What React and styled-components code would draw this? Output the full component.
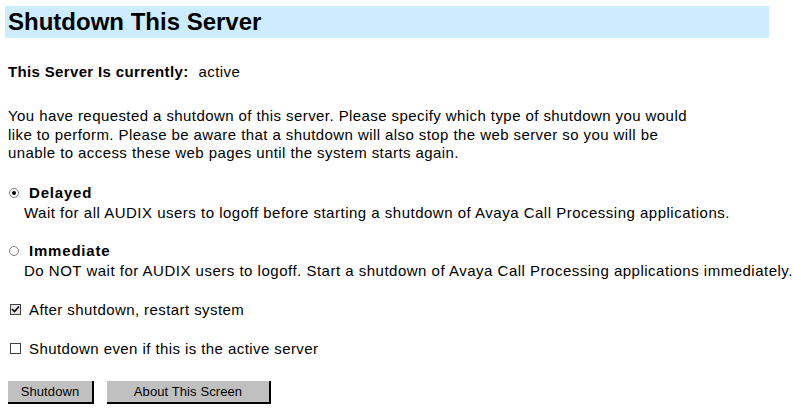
import React from 'react';
import styled, { createGlobalStyle } from 'styled-components';

const GlobalStyle = createGlobalStyle`
  body {
    margin: 0;
    background: #fff;
    font-family: "Liberation Sans", Arial, Helvetica, sans-serif;
    color: #000;
  }
`;

const Page = styled.div`
  width: 794px;
  height: 412px;
  padding: 6px 0 0 5px;
  box-sizing: border-box;
  overflow: hidden;
`;

const Banner = styled.h1`
  margin: 0;
  width: 764px;
  height: 32px;
  line-height: 32px;
  padding-left: 3px;
  box-sizing: border-box;
  background: #cdecff;
  font-size: 24px;
  font-weight: bold;
`;

const Body = styled.div`
  padding-left: 3px;
  font-size: 15px;
  letter-spacing: 0.42px;
`;

const Status = styled.div`
  margin-top: 25px;
  line-height: 18px;
`;

const StatusLabel = styled.b`
  margin-right: 10px;
  letter-spacing: 0.35px;
`;

const Intro = styled.p`
  margin: 26px 0 0;
  line-height: 18.5px;
  white-space: nowrap;
`;

const Option = styled.div`
  margin-top: ${(p) => p.$gap}px;
`;

const OptionRow = styled.label`
  display: flex;
  align-items: center;
  height: 20px;
`;

const OptionTitle = styled.b`
  margin-left: 10px;
  letter-spacing: 0.8px;
`;

const OptionText = styled.div`
  padding-left: 16px;
  height: 20px;
  line-height: 20px;
  white-space: nowrap;
  letter-spacing: 0.5px;
`;

const Radio = styled.span`
  width: 10px;
  height: 10px;
  margin-left: 1px;
  border: 1px solid #808080;
  border-radius: 50%;
  box-sizing: border-box;
  display: flex;
  align-items: center;
  justify-content: center;

  &::after {
    content: '';
    width: 4px;
    height: 4px;
    border-radius: 50%;
    background: ${(p) => (p.$checked ? '#000' : 'transparent')};
  }
`;

const CheckRow = styled.label`
  display: flex;
  align-items: center;
  height: 20px;
  margin-top: ${(p) => p.$gap}px;
`;

const Box = styled.span`
  width: 11px;
  height: 11px;
  margin-left: 2px;
  margin-right: 8px;
  border: 1px solid #404040;
  box-sizing: border-box;
  display: flex;
  align-items: center;
  justify-content: center;
  background: ${(p) => (p.$checked ? '#e8e8e8' : '#fff')};
`;

const Buttons = styled.div`
  display: flex;
  gap: 13px;
  margin-top: 22px;
`;

const Button = styled.button`
  width: ${(p) => p.$w}px;
  height: 23px;
  padding: 0;
  background: #c0c0c0;
  border: none;
  border-right: 2px solid #000;
  border-bottom: 2px solid #000;
  font-family: inherit;
  font-size: 13px;
  letter-spacing: 0.1px;
  color: #000;
`;

const Check = () => (
  <svg width="9" height="9" viewBox="0 0 9 9">
    <path d="M1 4 L3.5 6.5 L8 1.5" fill="none" stroke="#000" strokeWidth="1.6" />
  </svg>
);

export default function App() {
  return (
    <Page>
      <GlobalStyle />
      <Banner>Shutdown This Server</Banner>
      <Body>
        <Status>
          <StatusLabel>This Server Is currently:</StatusLabel>
          <span>active</span>
        </Status>
        <Intro>
          You have requested a shutdown of this server. Please specify which type of shutdown you would
          <br />
          like to perform. Please be aware that a shutdown will also stop the web server so you will be
          <br />
          unable to access these web pages until the system starts again.
        </Intro>
        <Option $gap={20}>
          <OptionRow>
            <Radio $checked />
            <OptionTitle>Delayed</OptionTitle>
          </OptionRow>
          <OptionText>
            Wait for all AUDIX users to logoff before starting a shutdown of Avaya Call Processing applications.
          </OptionText>
        </Option>
        <Option $gap={18}>
          <OptionRow>
            <Radio />
            <OptionTitle>Immediate</OptionTitle>
          </OptionRow>
          <OptionText>
            Do NOT wait for AUDIX users to logoff. Start a shutdown of Avaya Call Processing applications immediately.
          </OptionText>
        </Option>
        <CheckRow $gap={19}>
          <Box $checked>
            <Check />
          </Box>
          After shutdown, restart system
        </CheckRow>
        <CheckRow $gap={19}>
          <Box />
          Shutdown even if this is the active server
        </CheckRow>
        <Buttons>
          <Button $w={86}>Shutdown</Button>
          <Button $w={164}>About This Screen</Button>
        </Buttons>
      </Body>
    </Page>
  );
}
